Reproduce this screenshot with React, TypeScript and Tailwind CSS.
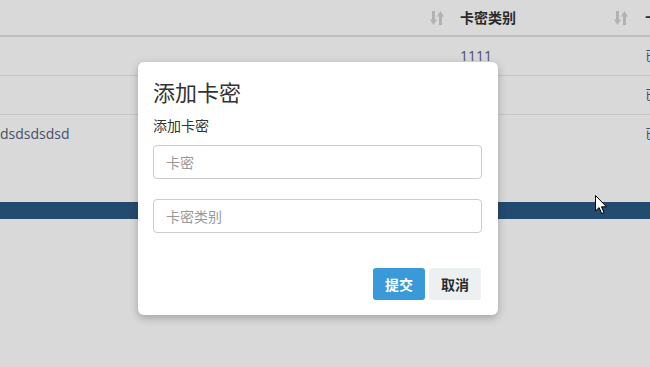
import React from 'react';

const font = { fontFamily: '"Open Sans", "Noto Sans CJK SC", sans-serif' };

const SortIcon = () => (
    <svg width="14" height="16" viewBox="0 0 14 16" fill="none">
        {/* down arrow */}
        <path d="M3.5 1v11" stroke="#b2b2b2" strokeWidth="3" />
        <path d="M0 9.5L3.5 15l3.5-5.5z" fill="#b2b2b2" />
        {/* up arrow */}
        <path d="M10.5 4v11" stroke="#b2b2b2" strokeWidth="3" />
        <path d="M7 6.5L10.5 1l3.5 5.5z" fill="#b2b2b2" />
    </svg>
);

const rows = [
    { name: '', type: '1111', status: '已使用', h: 'h-[39px] border-b border-[#c6c6c6]' },
    { name: '', type: '', status: '已使用', h: 'h-[39px] border-b border-[#c6c6c6]' },
    { name: 'dsdsdsdsd', type: '', status: '已使用', h: 'h-[87px]' },
];

export default function App() {
    return (
        <div className="relative w-[650px] h-[367px] overflow-hidden bg-[#d9d9d9]" style={font}>
            {/* Table header */}
            <div className="flex h-[37px] border-b-2 border-[#bebebe] text-[14px] font-bold text-[#2a2a2a]">
                <div className="w-[460px] shrink-0 flex items-center justify-end pr-[16px]">
                    <SortIcon />
                </div>
                <div className="w-[185px] shrink-0 flex items-center justify-between pr-[17px]">
                    <span>卡密类别</span>
                    <SortIcon />
                </div>
                <div className="shrink-0 flex items-center whitespace-nowrap">卡密状态</div>
            </div>

            {/* Table rows */}
            {rows.map((r, i) => (
                <div key={i} className={`flex pt-[9px] text-[14px] leading-[20px] text-[#46506a] ${r.h}`}>
                    <div className="w-[460px] shrink-0">{r.name}</div>
                    <div className="w-[185px] shrink-0">{r.type}</div>
                    <div className="shrink-0 whitespace-nowrap">{r.status}</div>
                </div>
            ))}

            {/* Bar */}
            <div className="h-[17px] bg-[#234b6f]"></div>

            {/* Modal */}
            <div className="absolute left-[138px] top-[62px] w-[360px] h-[253px] bg-white rounded-[6px] shadow-[0_3px_9px_rgba(0,0,0,0.25)] pl-[15px] pr-[16px] pt-[15px]">
                <div className="text-[22px] leading-[31px] text-[#333]">添加卡密</div>
                <div className="mt-[8px] text-[14px] leading-[20px] text-[#333]">添加卡密</div>
                <div className="mt-[9px] h-[34px] border border-[#cccccc] rounded-[4px] flex items-center pl-[12px] text-[14px] text-[#999]">
                    卡密
                </div>
                <div className="mt-[20px] h-[34px] border border-[#cccccc] rounded-[4px] flex items-center pl-[12px] text-[14px] text-[#999]">
                    卡密类别
                </div>
                <div className="mt-[35px] flex justify-end gap-[4px] pr-[1px]">
                    <button className="w-[52px] h-[32px] rounded-[3px] bg-[#3a9ad9] text-white text-[14px] font-bold">提交</button>
                    <button className="w-[52px] h-[32px] rounded-[3px] bg-[#ecf0f1] text-[#2c2c2c] text-[14px] font-bold">取消</button>
                </div>
            </div>

            {/* Mouse cursor */}
            <svg className="absolute left-[595px] top-[195px]" width="13" height="20" viewBox="0 0 13 20">
                <path d="M0.5 0.5v15.5l3.6-3.4 2.6 6 2.3-1-2.5-5.8h5z" fill="#fff" stroke="#000" strokeWidth="1" strokeLinejoin="round" />
            </svg>
        </div>
    );
}
